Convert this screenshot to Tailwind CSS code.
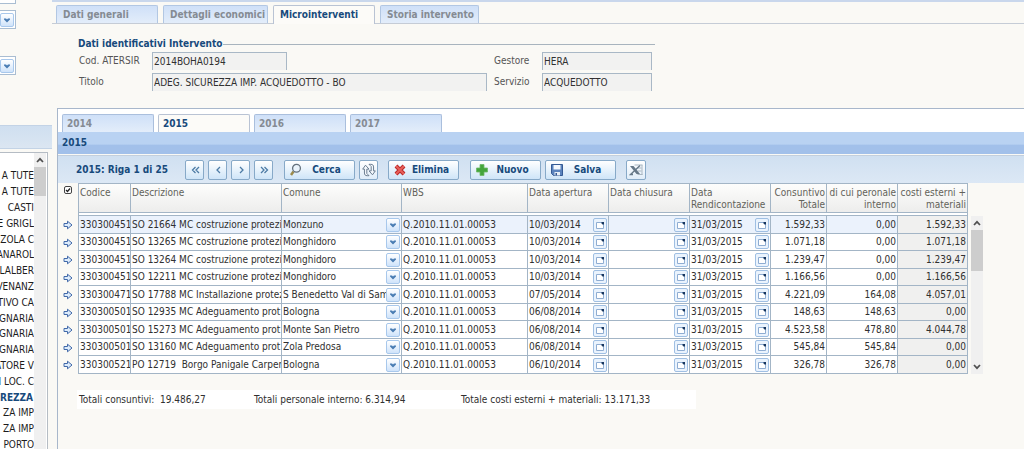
<!DOCTYPE html>
<html lang="it">
<head>
<meta charset="utf-8">
<title>Microinterventi</title>
<script src="https://cdn.jsdelivr.net/npm/@tailwindcss/browser@4"></script>
</head>
<body class="flex h-screen overflow-hidden bg-[#faf9f5] font-['DejaVu_Sans_Condensed','DejaVu_Sans',sans-serif] text-[10px] leading-3 text-[#303030]">
<svg class="hidden">
  <symbol id="chev" viewBox="0 0 12 12"><path d="M3 4.500h2L6 5.500l1-1h2v1L6 8.500l-3-3z" fill="#4a7db3"/></symbol>
  <symbol id="cal" viewBox="0 0 12 12"><path d="M2.500 3.500h7v6h-7z" fill="#fff" stroke="#8fadd2"/><path d="M7.500 3h2.500v2.500H8.500l-1-1z" fill="#17365f"/></symbol>
  <symbol id="arrow" viewBox="0 0 10 10"><path d="M1 3.500h3.500V1.200L9 5 4.500 8.800V6.500H1z" fill="#dcebfb" stroke="#4068a8" stroke-linejoin="round"/></symbol>
  <symbol id="up" viewBox="0 0 8 6"><path d="M1 5l3-3.200L7 5" fill="none" stroke="#505050" stroke-width="1.700"/></symbol>
</svg>

<aside class="flex w-[52px] shrink-0 flex-col">
  <div class="h-[125px] overflow-hidden">
    <div class="flex h-1 w-4 items-end border-r border-b border-[#a9bdd2] bg-white"></div>
    <div class="mt-1.5 flex h-[19px] w-4 items-center border border-l-0 border-[#a9bdd2] bg-white"><button aria-label="Apri elenco" class="size-3.5 rounded-xs border border-[#a8c8ec] bg-linear-to-b from-white to-[#cfe3fa]"><svg class="size-3"><use href="#chev"/></svg></button></div>
    <div class="mt-[27px] flex h-[19px] w-4 items-center border border-l-0 border-[#a9bdd2] bg-white"><button aria-label="Apri elenco" class="size-3.5 rounded-xs border border-[#a8c8ec] bg-linear-to-b from-white to-[#cfe3fa]"><svg class="size-3"><use href="#chev"/></svg></button></div>
  </div>
  <div class="h-6 shrink-0 border-t border-b border-[#c3d3e6] bg-linear-to-b from-[#cfdff0] to-[#dbe6f2]"></div>
  <div class="mt-[3px] mr-1 flex min-h-0 flex-1 border-t border-r border-[#b5bcc4] bg-white">
    <ul id="list" class="w-[34px] shrink-0 overflow-hidden pt-[17px] whitespace-nowrap text-[#1c1c1c]"></ul>
    <div class="w-3 bg-[#f0f0f0]">
      <svg class="mx-auto mt-1 h-1.5 w-2"><use href="#up"/></svg>
      <div class="mt-1 h-[29px] bg-[#cdcdcd]"></div>
    </div>
  </div>
</aside>

<main class="flex min-w-0 flex-1 flex-col">
  <div class="h-0.5 shrink-0 bg-[#c9d7ec]"></div>
  <nav class="flex h-[22px] shrink-0 items-end gap-[5px] border-b border-[#c5ccd6] pl-1 font-bold text-[#858b93]">
    <button class="h-[18px] w-[102px] rounded-t-xs border border-b-0 border-[#b2c7e3] bg-linear-to-b from-[#cfe0f8] to-[#e3edfa] pl-1.5 text-left">Dati generali</button>
    <button class="h-[18px] w-[105px] rounded-t-xs border border-b-0 border-[#b2c7e3] bg-linear-to-b from-[#cfe0f8] to-[#e3edfa] pl-1.5 text-left">Dettagli economici</button>
    <button class="-mb-px h-[19px] w-[102px] rounded-t-xs border border-b-0 border-[#b9c3d4] bg-[#fcfbf8] pl-1.5 text-left text-[#174a7c]">Microinterventi</button>
    <button class="h-[18px] w-[99px] rounded-t-xs border border-b-0 border-[#b2c7e3] bg-linear-to-b from-[#cfe0f8] to-[#e3edfa] pl-1.5 text-left">Storia intervento</button>
  </nav>

  <fieldset class="mt-3.5 mr-[369px] ml-[22px] shrink-0 border-t border-[#a8b4be] pl-1 text-[#555]">
    <legend class="-ml-1 pr-px pl-1 font-bold text-[#174a7c]">Dati identificativi Intervento</legend>
    <div class="mt-0.5 grid grid-cols-[74px_335px_55px_110px] gap-y-[3px]">
      <label for="cod" class="pt-[3px] pl-px">Cod. ATERSIR</label><input id="cod" readonly value="2014BOHA0194" class="h-[18px] w-[135px] border border-b-0 border-[#a9b8c6] bg-[#f2f2f1] px-px text-[#303030]">
      <label for="ges" class="pt-[3px] pl-[7px]">Gestore</label><input id="ges" readonly value="HERA" class="h-[18px] w-full border border-b-0 border-[#a9b8c6] bg-[#f2f2f1] px-px text-[#303030]">
      <label for="tit" class="pt-[3px] pl-px">Titolo</label><input id="tit" readonly value="ADEG. SICUREZZA IMP. ACQUEDOTTO - BO" class="h-[18px] w-full border border-b-0 border-[#a9b8c6] bg-[#f2f2f1] px-px text-[#303030]">
      <label for="ser" class="pt-[3px] pl-[7px]">Servizio</label><input id="ser" readonly value="ACQUEDOTTO" class="h-[18px] w-full border border-b-0 border-[#a9b8c6] bg-[#f2f2f1] px-px text-[#303030]">
    </div>
  </fieldset>

  <section class="mt-[17px] ml-[5px] flex min-h-0 flex-1 flex-col border-t border-l border-[#a8b7cb]">
    <nav class="flex h-[23px] shrink-0 items-end gap-1 bg-white pl-1 font-bold text-[#858b93]">
      <button class="h-[18px] w-[92px] rounded-t-xs border border-b-0 border-[#aabfdd] bg-linear-to-b from-[#cfe0f8] to-[#e3edfa] pl-1 text-left">2014</button>
      <button class="h-[18px] w-[92px] rounded-t-xs border border-b-0 border-[#b9c3d4] bg-[#fcfbf8] pl-1 text-left text-[#174a7c]">2015</button>
      <button class="h-[18px] w-[92px] rounded-t-xs border border-b-0 border-[#aabfdd] bg-linear-to-b from-[#cfe0f8] to-[#e3edfa] pl-1 text-left">2016</button>
      <button class="h-[18px] w-[92px] rounded-t-xs border border-b-0 border-[#aabfdd] bg-linear-to-b from-[#cfe0f8] to-[#e3edfa] pl-1 text-left">2017</button>
    </nav>
    <h2 class="h-[22px] shrink-0 bg-linear-to-b from-[#b9d2f2] from-55% to-[#a2c0ea] to-60% pt-[5px] pl-1 font-bold text-[#174a7c]">2015</h2>
    <div class="mt-px flex h-[28px] shrink-0 items-center border-t border-[#c3cfdd] bg-linear-to-b from-[#d0e0f1] to-[#dce8f5] pl-[18px] font-bold text-[#174a7c]">
      <span class="w-[109px]">2015: Riga 1 di 25</span>
      <div id="pager" class="mr-[11px] flex gap-1"></div>
      <div class="flex gap-1">
        <button class="flex h-5 w-[71px] items-center rounded-xs border border-[#87a9c8] bg-linear-to-b from-white to-[#cfe5f8] pl-1"><svg class="size-3.5" viewBox="0 0 14 14"><path d="M4.500 8.500L2 12" stroke="#9b8a4a" stroke-width="2.500"/><circle cx="7.500" cy="5.200" r="3.900" fill="#eaf3fb" stroke="#65717d" stroke-width="1.300"/></svg><span class="flex-1 pr-1 text-center">Cerca</span></button>
        <button aria-label="Aggiorna" class="grid h-5 w-[19px] place-items-center rounded-xs border border-[#87a9c8] bg-linear-to-b from-white to-[#e0edf9]"><svg class="size-3.5" viewBox="0 0 16 16" fill="#f4f8fc" stroke="#66798c" stroke-width="1.100"><path d="M5.500 12V7H8L4 2.500.8 7h2v4.500c0 2 1 3 3.200 3h2L6.500 13z"/><path d="M10.500 4v5h-2.500l4 4.500L15.200 9h-2V4.500c0-2-1-3-3.200-3H8L9.500 3z"/></svg></button>
      </div>
      <div class="ml-2.5 flex gap-[11px]">
        <button class="flex h-5 w-[71px] items-center rounded-xs border border-[#87a9c8] bg-linear-to-b from-white to-[#cfe5f8] pl-1"><svg class="size-3.5" viewBox="0 0 14 14"><path d="M3 3l8 8M11 3l-8 8" stroke="#b92828" stroke-width="4"/><path d="M3 3l8 8M11 3l-8 8" stroke="#e8605a" stroke-width="2"/></svg><span class="flex-1 pr-1 text-center">Elimina</span></button>
        <button class="flex h-5 w-[71px] items-center rounded-xs border border-[#87a9c8] bg-linear-to-b from-white to-[#cfe5f8] pl-1"><svg class="size-3.5" viewBox="0 0 14 14"><path d="M5 1.500h4V5h3.500v4H9v3.500H5V9H1.500V5H5z" fill="#44a53c" stroke="#6fb868" stroke-width=".8"/></svg><span class="flex-1 pr-1 text-center">Nuovo</span></button>
      </div>
      <button class="ml-1 flex h-5 w-[71px] items-center rounded-xs border border-[#87a9c8] bg-linear-to-b from-white to-[#cfe5f8] pl-1"><svg class="size-3.5" viewBox="0 0 14 14"><path d="M1.500 1.500h11v11h-9l-2-2z" fill="#5b83bd" stroke="#355a94"/><path d="M3.500 2h7v4.500h-7z" fill="#f4f8fd"/><path d="M4.500 9h5.500v3.500H4.500z" fill="#e6edf6"/><path d="M5.500 10h1.500v2.500H5.500z" fill="#355a94"/></svg><span class="flex-1 pr-1 text-center">Salva</span></button>
      <button aria-label="Esporta Excel" class="ml-2.5 grid h-5 w-5 place-items-center rounded-xs border border-[#87a9c8] bg-linear-to-b from-white to-[#e0edf9]"><svg class="size-3.5" viewBox="0 0 14 14"><path d="M5.500 2h8M8.500 5h4M8.500 8h4M8.500 11.500h5M13 2v10" stroke="#a9b6c1"/><path d="M1 3h3.500l6.500 8H7.500z" fill="#667888"/><path d="M11 2.500L1.500 11.500H4" fill="none" stroke="#667888" stroke-width="1.400"/></svg></button>
    </div>

    <div class="flex shrink-0 items-end gap-[3px]">
      <table class="w-[909px] table-fixed border-separate border-spacing-0">
        <colgroup><col class="w-[20px]"><col class="w-[53px]"><col class="w-[151px]"><col class="w-[120px]"><col class="w-[126px]"><col class="w-[81px]"><col class="w-[81px]"><col class="w-[81px]"><col class="w-[56px]"><col class="w-[71px]"><col class="w-[70px]"></colgroup>
        <thead>
          <tr class="text-left align-top text-[#62625a] [&>th]:h-[30px] [&>th]:border-[#a3b5c6] [&>th]:px-px [&>th]:pt-[3px] [&>th]:font-normal [&>th]:whitespace-nowrap [&>th:not(:first-child)]:border-y [&>th:not(:first-child)]:border-r [&>th:not(:first-child)]:bg-linear-to-b [&>th:not(:first-child)]:from-[#fdfdfc] [&>th:not(:first-child)]:to-[#ededec]">
            <th><div class="grid place-items-center"><input type="checkbox" checked aria-label="Seleziona tutte" class="col-start-1 row-start-1 size-2 appearance-none rounded-xs border border-[#444] bg-white"><svg class="pointer-events-none col-start-1 row-start-1 size-2" viewBox="0 0 8 8"><path d="M2 4l1.500 1.500L6 2.500" fill="none" stroke="#222" stroke-width="1.300"/></svg></div></th>
            <th class="border-l">Codice</th><th>Descrizione</th><th>Comune</th><th>WBS</th><th>Data apertura</th><th>Data chiusura</th><th>Data<br>Rendicontazione</th><th class="text-right">Consuntivo<br>Totale</th><th class="text-right">di cui peronale<br>interno</th><th class="text-right">costi esterni +<br>materiali</th>
          </tr>
          <tr class="[&>td]:h-[3px] [&>td]:border-[#a3b5c6] [&>td]:p-0"><td></td><td class="border-b border-l bg-white"></td><td colspan="9" class="border-r border-b bg-white"></td></tr>
        </thead>
        <tbody id="rows"></tbody>
      </table>
      <div class="flex h-[158px] w-3 flex-col items-center bg-[#f0f0f0] py-1">
        <svg class="h-1.5 w-2 shrink-0"><use href="#up"/></svg>
        <div class="mt-1 h-[41px] w-full bg-[#cdcdcd]"></div>
        <svg class="mt-auto h-1.5 w-2 shrink-0 rotate-180"><use href="#up"/></svg>
      </div>
    </div>

    <div class="mt-4 ml-[19px] flex h-[19px] w-[619px] shrink-0 items-center bg-white pl-0.5 whitespace-nowrap">
      <div class="w-[175px]">Totali consuntivi:&nbsp; 19.486,27</div>
      <div class="w-[207px]">Totali personale interno: 6.314,94</div>
      <div>Totale costi esterni + materiali: 13.171,33</div>
    </div>
  </section>
</main>

<script>
const items = ['A TUTE','A TUTE','CASTI','E GRIGL','ZOLA C','ANAROL','LALBER','VENANZ','TIVO CA','OGNARIA','OGNARIA','OGNARIA','ATORE V','II LOC. C','*REZZA','ZA IMP','ZA IMP','PORTO'];
document.getElementById('list').innerHTML = items.map(t => t[0] === '*'
  ? `<li class="flex h-4 justify-start font-bold text-[#174a7c] nth-[5n]:h-[15px]">${t.slice(1)}</li>`
  : `<li class="flex h-4 justify-end nth-[5n]:h-[15px]">${t}</li>`).join('');

const pages = [['Prima','M6.500 2L3.500 5l3 3M10 2L7 5l3 3'],['Precedente','M8 2L5 5l3 3'],['Successiva','M5 2l3 3-3 3'],['Ultima','M3 2l3 3-3 3M6.500 2l3 3-3 3']];
document.getElementById('pager').innerHTML = pages.map(([n, d]) =>
  `<button aria-label="${n}" class="grid h-5 w-[19px] place-items-center rounded-xs border border-[#87a9c8] bg-linear-to-b from-white to-[#cfe5f8]"><svg class="h-2.5 w-3" viewBox="0 0 12 10"><path d="${d}" fill="none" stroke="#4d7ba5" stroke-width="1.300"/></svg></button>`).join('');

const data = [
 ['330300451','SO 21664 MC costruzione protezi','Monzuno','10/03/2014','1.592,33','0,00','1.592,33'],
 ['330300451','SO 13265 MC costruzione protezi','Monghidoro','10/03/2014','1.071,18','0,00','1.071,18'],
 ['330300451','SO 13264 MC costruzione protezi','Monghidoro','10/03/2014','1.239,47','0,00','1.239,47'],
 ['330300451','SO 12211 MC costruzione protezi','Monghidoro','10/03/2014','1.166,56','0,00','1.166,56'],
 ['330300471','SO 17788 MC Installazione protez','S Benedetto Val di Sam','07/05/2014','4.221,09','164,08','4.057,01'],
 ['330300501','SO 12935 MC Adeguamento prot','Bologna','06/08/2014','148,63','148,63','0,00'],
 ['330300501','SO 15273 MC Adeguamento prot','Monte San Pietro','06/08/2014','4.523,58','478,80','4.044,78'],
 ['330300501','SO 13160 MC Adeguamento prot','Zola Predosa','06/08/2014','545,84','545,84','0,00'],
 ['330300521','PO 12719&nbsp; Borgo Panigale Carper','Bologna','06/10/2014','326,78','326,78','0,00']];
const date = (label, v) => `<td><div class="flex items-center"><input aria-label="${label}" value="${v}" class="min-w-0 flex-1 bg-transparent"><button aria-label="Calendario" class="size-3.5 shrink-0 rounded-xs border border-[#9fbfe3] bg-[#eaf3fd]"><svg class="size-3"><use href="#cal"/></svg></button></div></td>`;
document.getElementById('rows').innerHTML = data.map(r => `
<tr class="bg-white first:bg-[#ebf2fc] odd:h-[18px] even:h-[17px] [&>td]:overflow-hidden [&>td]:border-[#a3b5c6] [&>td]:px-px [&>td]:py-0 [&>td]:whitespace-nowrap [&>td:not(:first-child)]:border-r [&>td:not(:first-child)]:border-b">
<td class="bg-[#faf9f5]"><svg class="mx-auto size-2.5"><use href="#arrow"/></svg></td>
<td class="border-l">${r[0]}</td><td>${r[1]}</td>
<td><div class="flex items-center"><select aria-label="Comune" class="min-w-0 flex-1 appearance-none bg-transparent"><option>${r[2]}</option></select><span class="pointer-events-none size-3.5 shrink-0 rounded-xs border border-[#a8c8ec] bg-linear-to-b from-white to-[#cfe3fa]"><svg class="size-3"><use href="#chev"/></svg></span></div></td>
<td>Q.2010.11.01.00053</td>${date('Data apertura', r[3])}${date('Data chiusura', '')}${date('Data rendicontazione', '31/03/2015')}
<td class="text-right">${r[4]}</td><td class="text-right">${r[5]}</td><td class="bg-[#f0f0ef] text-right">${r[6]}</td></tr>`).join('');
</script>
</body>
</html>
